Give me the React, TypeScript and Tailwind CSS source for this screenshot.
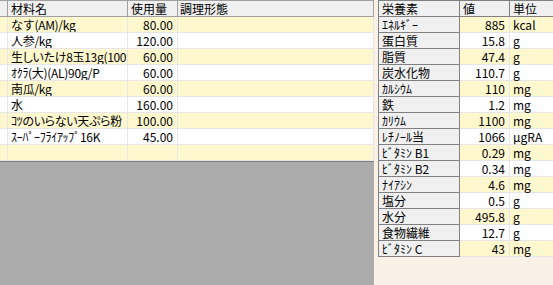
const font = "font-['Noto_Sans_CJK_JP','Liberation_Sans',sans-serif]";

const ingredients = [
  { name: "なす(AM)/kg", qty: "80.00", palt: false },
  { name: "人参/kg", qty: "120.00", palt: false },
  { name: "生しいたけ8玉13g(100", qty: "60.00", palt: true },
  { name: "ｵｸﾗ(大)(AL)90g/P", qty: "60.00", palt: false },
  { name: "南瓜/kg", qty: "60.00", palt: false },
  { name: "水", qty: "160.00", palt: false },
  { name: "ｺﾂのいらない天ぷら粉", qty: "100.00", palt: true },
  { name: "ｽｰﾊﾟｰﾌﾗｲｱｯﾌﾟ16K", qty: "45.00", palt: false },
  { name: "", qty: "", palt: false },
];

const nutrients = [
  { name: "ｴﾈﾙｷﾞｰ", value: "885", unit: "kcal" },
  { name: "蛋白質", value: "15.8", unit: "g" },
  { name: "脂質", value: "47.4", unit: "g" },
  { name: "炭水化物", value: "110.7", unit: "g" },
  { name: "ｶﾙｼｳﾑ", value: "110", unit: "mg" },
  { name: "鉄", value: "1.2", unit: "mg" },
  { name: "ｶﾘｳﾑ", value: "1100", unit: "mg" },
  { name: "ﾚﾁﾉｰﾙ当", value: "1066", unit: "μgRA" },
  { name: "ﾋﾞﾀﾐﾝ B1", value: "0.29", unit: "mg" },
  { name: "ﾋﾞﾀﾐﾝ B2", value: "0.34", unit: "mg" },
  { name: "ﾅｲｱｼﾝ", value: "4.6", unit: "mg" },
  { name: "塩分", value: "0.5", unit: "g" },
  { name: "水分", value: "495.8", unit: "g" },
  { name: "食物繊維", value: "12.7", unit: "g" },
  { name: "ﾋﾞﾀﾐﾝ C", value: "43", unit: "mg" },
];

function IngredientGrid() {
  return (
    <div className="w-[374px] bg-[#ababab] flex flex-col">
      <div className="grid grid-cols-[8px_120px_50px_196px] h-[17px] bg-[#f0f0f0] border-t border-[#a0a0a0] border-b border-b-[#a0a0a0]">
        <div className="border-r border-[#a0a0a0]" />
        <div className="border-r border-[#a0a0a0] pl-[3px] leading-[15px]">材料名</div>
        <div className="border-r border-[#a0a0a0] pl-[3px] leading-[15px]">使用量</div>
        <div className="border-r border-[#a0a0a0] pl-[2px] leading-[15px]">調理形態</div>
      </div>
      {ingredients.map((row, i) => (
        <div
          key={i}
          className={`grid grid-cols-[8px_120px_50px_196px] h-[16px] border-b border-[#e6e6e6] ${
            i % 2 === 0 ? "bg-[#fff8cf]" : "bg-white"
          }`}
        >
          <div className="border-r border-[#e6e6e6]" />
          <div
            className={`border-r border-[#e6e6e6] pl-[3px] leading-[15px] whitespace-nowrap overflow-hidden tracking-[-0.3px] ${
              row.palt ? "[font-feature-settings:'palt']" : ""
            }`}
          >
            {row.name}
          </div>
          <div className="border-r border-[#e6e6e6] pr-[4px] text-right leading-[15px]">{row.qty}</div>
          <div className="border-r border-[#e6e6e6]" />
        </div>
      ))}
      <div className="h-[1px] bg-[#808080]" />
    </div>
  );
}

function NutrientGrid() {
  return (
    <div className="flex-1 bg-[#f9f0e6] pl-[4px] overflow-hidden">
      <div className="border-l border-[#808080] w-[200px]">
        <div className="grid grid-cols-[81px_50px_69px] h-[17px] bg-[#f0f0f0] border-t border-[#808080] border-b border-b-[#808080]">
          <div className="border-r border-[#808080] pl-[3px] leading-[15px]">栄養素</div>
          <div className="border-r border-[#808080] pl-[3px] leading-[15px]">値</div>
          <div className="pl-[3px] leading-[15px]">単位</div>
        </div>
        {nutrients.map((row, i) => (
          <div
            key={i}
            className={`grid grid-cols-[81px_50px_69px] h-[16px] ${i % 2 === 0 ? "bg-[#fff8cf]" : "bg-white"}`}
          >
            <div className="bg-[#f0f0f0] border-r border-b border-[#808080] pl-[3px] leading-[15px] whitespace-nowrap">{row.name}</div>
            <div className="border-r border-b border-[#e6e6e6] pr-[4px] text-right leading-[15px]">{row.value}</div>
            <div className="border-b border-[#e6e6e6] pl-[3px] leading-[15px]">{row.unit}</div>
          </div>
        ))}
      </div>
    </div>
  );
}

export default function App() {
  return (
    <div className={`${font} w-[553px] h-[285px] flex text-[12px] text-black overflow-hidden bg-[#ababab]`}>
      <IngredientGrid />
      <NutrientGrid />
    </div>
  );
}
